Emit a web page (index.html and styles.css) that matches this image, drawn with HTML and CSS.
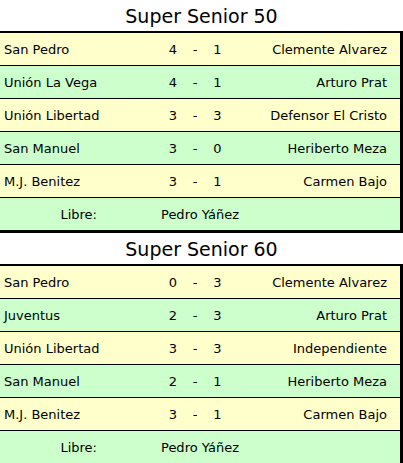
FILE: index.html
```html
<!DOCTYPE html>
<html lang="es">
<head>
<meta charset="utf-8">
<link rel="stylesheet" href="styles.css">
</head>
<body>
<section class="group">
  <h2 class="title">Super Senior 50</h2>
  <div class="board">
    <div class="row yellow"><span class="home">San Pedro</span><span class="g">4</span><span class="dash">-</span><span class="g">1</span><span class="away">Clemente Alvarez</span></div>
    <div class="row green"><span class="home">Unión La Vega</span><span class="g">4</span><span class="dash">-</span><span class="g">1</span><span class="away">Arturo Prat</span></div>
    <div class="row yellow"><span class="home">Unión Libertad</span><span class="g">3</span><span class="dash">-</span><span class="g">3</span><span class="away">Defensor El Cristo</span></div>
    <div class="row green"><span class="home">San Manuel</span><span class="g">3</span><span class="dash">-</span><span class="g">0</span><span class="away">Heriberto Meza</span></div>
    <div class="row yellow"><span class="home">M.J. Benitez</span><span class="g">3</span><span class="dash">-</span><span class="g">1</span><span class="away">Carmen Bajo</span></div>
    <div class="row free green"><span class="label">Libre:</span><span class="name">Pedro Yáñez</span></div>
  </div>
</section>
<section class="group">
  <h2 class="title">Super Senior 60</h2>
  <div class="board">
    <div class="row yellow"><span class="home">San Pedro</span><span class="g">0</span><span class="dash">-</span><span class="g">3</span><span class="away">Clemente Alvarez</span></div>
    <div class="row green"><span class="home">Juventus</span><span class="g">2</span><span class="dash">-</span><span class="g">3</span><span class="away">Arturo Prat</span></div>
    <div class="row yellow"><span class="home">Unión Libertad</span><span class="g">3</span><span class="dash">-</span><span class="g">3</span><span class="away">Independiente</span></div>
    <div class="row green"><span class="home">San Manuel</span><span class="g">2</span><span class="dash">-</span><span class="g">1</span><span class="away">Heriberto Meza</span></div>
    <div class="row yellow"><span class="home">M.J. Benitez</span><span class="g">3</span><span class="dash">-</span><span class="g">1</span><span class="away">Carmen Bajo</span></div>
    <div class="row free green"><span class="label">Libre:</span><span class="name">Pedro Yáñez</span></div>
  </div>
</section>
</body>
</html>
```

FILE: styles.css
```css
html, body {
  margin: 0;
  padding: 0;
  background: #ffffff;
}
body {
  font-family: "DejaVu Sans", Verdana, sans-serif;
  font-size: 13px;
  color: #000000;
  width: 403px;
}
.title {
  margin: 0;
  height: 31px;
  display: flex;
  align-items: center;
  justify-content: center;
  font-weight: normal;
  font-size: 19px;
  padding-top: 1px;
  box-sizing: border-box;
}
.board {
  border-top: 2px solid #000;
  border-right: 3px solid #000;
  border-bottom: 3px solid #000;
}
.row {
  display: grid;
  grid-template-columns: 161px 24px 20px 25px 1fr;
  align-items: center;
  height: 32px;
  padding-top: 1px;
  box-sizing: border-box;
}
.row + .row {
  border-top: 1px solid #000;
  height: 33px;
}
.yellow { background: #ffffcc; }
.green { background: #ccffcc; }
.home { padding-left: 4px; }
.g, .dash { text-align: center; }
.away { text-align: right; padding-right: 13px; }
.row.free {
  grid-template-columns: 161px 1fr;
}
.label {
  text-align: right;
  padding-right: 64px;
}
.name { text-align: left; }
```
